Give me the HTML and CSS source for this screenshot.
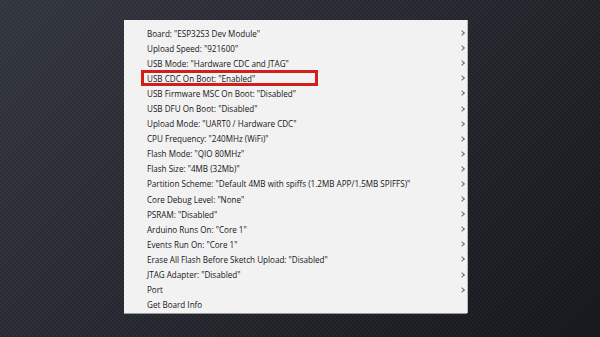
FILE: index.html
```html
<!DOCTYPE html>
<html>
<head>
<meta charset="utf-8">
<link rel="stylesheet" href="styles.css">
</head>
<body>
<div class="stage">
  <div class="menu">
    <div class="row"><span>Board: "ESP32S3 Dev Module"</span><i class="chev"></i></div>
    <div class="row"><span>Upload Speed: "921600"</span><i class="chev"></i></div>
    <div class="row"><span>USB Mode: "Hardware CDC and JTAG"</span><i class="chev"></i></div>
    <div class="row hl"><span>USB CDC On Boot: "Enabled"</span><i class="chev"></i><b class="mark"></b></div>
    <div class="row"><span>USB Firmware MSC On Boot: "Disabled"</span><i class="chev"></i></div>
    <div class="row"><span>USB DFU On Boot: "Disabled"</span><i class="chev"></i></div>
    <div class="row"><span>Upload Mode: "UART0 / Hardware CDC"</span><i class="chev"></i></div>
    <div class="row"><span>CPU Frequency: "240MHz (WiFi)"</span><i class="chev"></i></div>
    <div class="row"><span>Flash Mode: "QIO 80MHz"</span><i class="chev"></i></div>
    <div class="row"><span>Flash Size: "4MB (32Mb)"</span><i class="chev"></i></div>
    <div class="row"><span>Partition Scheme: "Default 4MB with spiffs (1.2MB APP/1.5MB SPIFFS)"</span><i class="chev"></i></div>
    <div class="row"><span>Core Debug Level: "None"</span><i class="chev"></i></div>
    <div class="row"><span>PSRAM: "Disabled"</span><i class="chev"></i></div>
    <div class="row"><span>Arduino Runs On: "Core 1"</span><i class="chev"></i></div>
    <div class="row"><span>Events Run On: "Core 1"</span><i class="chev"></i></div>
    <div class="row"><span>Erase All Flash Before Sketch Upload: "Disabled"</span><i class="chev"></i></div>
    <div class="row"><span>JTAG Adapter: "Disabled"</span><i class="chev"></i></div>
    <div class="row"><span>Port</span><i class="chev"></i></div>
    <div class="row"><span>Get Board Info</span></div>
  </div>
</div>
</body>
</html>
```
FILE: styles.css
```css
html, body {
  margin: 0;
  padding: 0;
  width: 600px;
  height: 337px;
  overflow: hidden;
}
body {
  background-color: #25282e;
  background-image:
    linear-gradient(135deg, rgba(62,66,76,0.55) 0%, rgba(40,43,50,0.2) 45%, rgba(12,13,16,0.6) 100%),
    conic-gradient(#2d3038 25%, #23262c 0 50%, #2d3038 0 75%, #23262c 0);
  background-size: 100% 100%, 4px 4px;
}
.stage {
  padding: 20px 0 0 124px;
}
.menu {
  width: 343px;
  height: 293px;
  box-sizing: border-box;
  background: #f2f2f2;
  padding: 5.5px 0 0 23px;
  display: flex;
  flex-direction: column;
  box-shadow: 0 1px 0 #9a9a9a, 1px 0 0 #b8b8b8;
  font-family: "Open Sans", "Noto Sans", sans-serif;
  font-size: 8.1px;
  color: #151515;
}
.row {
  position: relative;
  height: 15.1px;
  display: flex;
  align-items: center;
  justify-content: space-between;
  padding-right: 3px;
  white-space: nowrap;
}
.chev {
  width: 3px;
  height: 3px;
  border-right: 1px solid #6a6a6a;
  border-top: 1px solid #6a6a6a;
  transform: rotate(45deg);
}
.mark {
  position: absolute;
  left: -6px;
  top: -0.5px;
  width: 177px;
  height: 16px;
  box-sizing: border-box;
  border: 3px solid #d21f1b;
}
```
